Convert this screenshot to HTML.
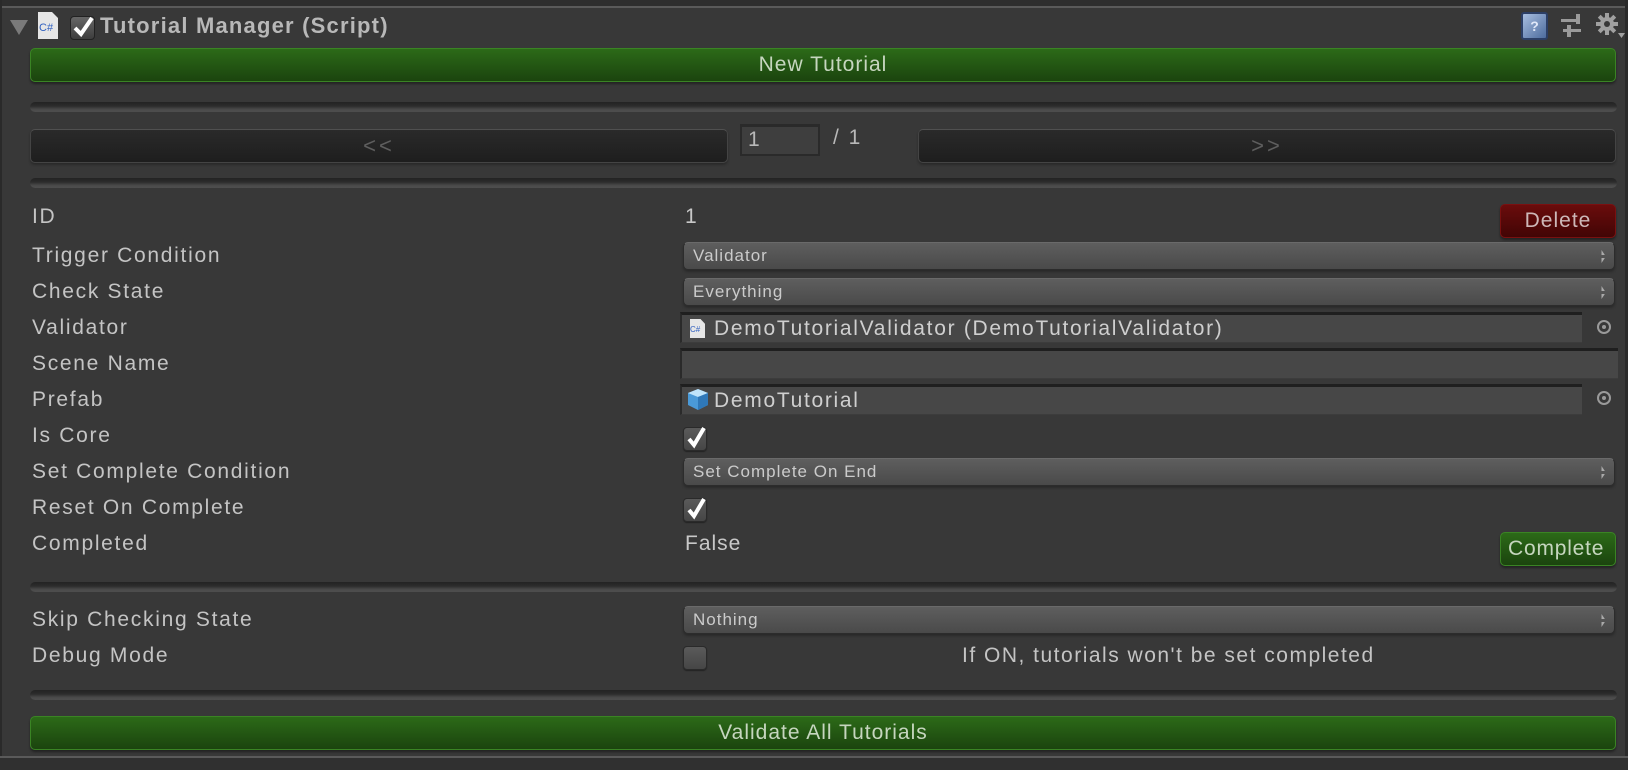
<!DOCTYPE html>
<html><head><meta charset="utf-8"><style>
*{box-sizing:border-box;margin:0;padding:0}
body{width:1628px;height:770px;background:#383838;overflow:hidden;position:relative;font-family:"Liberation Sans",sans-serif;color:#c2c2c2}
.a{position:absolute}
.lbl{position:absolute;left:32px;font-size:21px;letter-spacing:1.7px;line-height:24px;color:#c4c4c4;margin-top:1px}
.green{position:absolute;border:1px solid #3a8424;border-radius:5px;background:linear-gradient(#2c6a18,#1b440e);box-shadow:0 2px 2px #222;color:#c6d6bf;text-align:center;font-size:21px;letter-spacing:1px}
.dark{position:absolute;border:1px solid #444;border-top-color:#505050;border-radius:5px;background:linear-gradient(#2a2a2a,#1e1e1e);box-shadow:0 2px 2px #2a2a2a;color:#5e5e5e;text-align:center;font-size:22px;letter-spacing:3px}
.sep{position:absolute;left:30px;width:1587px;height:10px;border-radius:5px;background:linear-gradient(#232323 0,#2c2c2c 40%,#4a4a4a 75%,#4e4e4e 100%)}
.dd{position:absolute;left:683px;width:932px;height:28px;border:1px solid #2c2c2c;border-top-color:#6a6a6a;border-radius:5px;background:linear-gradient(#5e5e5e,#4a4a4a);box-shadow:0 2px 2px #2a2a2a;color:#cbcbcb;font-size:17px;letter-spacing:1px;line-height:26px;padding-left:9px}
.dd:after{content:"";position:absolute;right:9px;top:7px;width:7px;height:13px;background:linear-gradient(#aaa 0,#aaa 40%,transparent 40%,transparent 60%,#aaa 60%);clip-path:polygon(50% 0,100% 40%,0 40%,0 60%,100% 60%,50% 100%)}
.obj{position:absolute;left:680px;height:31px;background:#474747;border-top:3px solid #1f1f1f;border-left:2px solid #2a2a2a;border-bottom:1px solid #3c3c3c;font-size:21px;letter-spacing:1.7px;line-height:27px;color:#cfcfcf;padding-left:32px}
.tgt{position:absolute;left:1597px;width:14px;height:14px;border:2px solid #9a9a9a;border-radius:50%}
.tgt:after{content:"";position:absolute;left:3px;top:3px;width:4px;height:4px;background:#9a9a9a;border-radius:50%}
.cb{position:absolute;left:683px;width:24px;height:24px;border-radius:4px;background:linear-gradient(#5a5a5a,#464646);border:1px solid #2a2a2a;box-shadow:0 1px 1px #222}
.cb svg{position:absolute;left:1px;top:-3px}
.val{position:absolute;left:685px;font-size:21px;letter-spacing:1px;color:#c8c8c8;margin-top:1px}
</style></head><body>
<div class="a" style="left:0;top:0;width:1628px;height:6px;background:#2e2e2e"></div>
<div class="a" style="left:0;top:6px;width:1628px;height:2px;background:#5a5a5a"></div>
<div class="a" style="left:0;top:0;width:2px;height:770px;background:#2a2a2a"></div>
<div class="a" style="left:1625px;top:0;width:3px;height:770px;background:#2a2a2a"></div>
<div class="a" style="left:0;top:756px;width:1628px;height:2px;background:#5a5a5a"></div>
<div class="a" style="left:0;top:758px;width:1628px;height:12px;background:#303030"></div>

<svg class="a" style="left:10px;top:20px" width="18" height="16"><polygon points="0,0 18,0 9,15" fill="#7a7a7a"/></svg>
<div class="a" style="left:38px;top:12px;width:20px;height:27px;background:#e6e6e6;clip-path:polygon(0 0,70% 0,100% 22%,100% 100%,0 100%)"><span style="position:absolute;left:1px;top:10px;font-size:11px;color:#3060c0">C#</span></div>
<div class="a" style="left:70px;top:16px;width:25px;height:24px;border-radius:4px;background:linear-gradient(#666,#3e3e3e);border:1px solid #222"><svg width="24" height="24" style="position:absolute;left:0;top:-2px"><path d="M4 13 L10 19 L21 3" stroke="#fff" stroke-width="4" fill="none"/></svg></div>
<div class="a" style="left:100px;top:13px;font-size:22px;font-weight:bold;color:#b8b8b8;letter-spacing:1.2px">Tutorial Manager (Script)</div>
<div class="a" style="left:1521px;top:12px;width:27px;height:28px;border-radius:3px;background:linear-gradient(135deg,#a8bee0,#4d6c9e);border:2px solid #2c3f66;color:#e0e8f8;font-size:14px;font-weight:bold;text-align:center;line-height:24px">?</div>
<svg class="a" style="left:1561px;top:13px" width="22" height="26"><rect x="0" y="6" width="16" height="3" fill="#9a9a9a"/><rect x="15" y="1" width="4" height="10" fill="#9a9a9a"/><rect x="2" y="16" width="18" height="3" fill="#9a9a9a"/><rect x="6" y="12" width="4" height="12" fill="#9a9a9a"/></svg>
<svg class="a" style="left:1596px;top:13px" width="30" height="26"><g fill="#a0a0a0"><circle cx="11" cy="11" r="7"/><rect x="9" y="0" width="4" height="22"/><rect x="0" y="9" width="22" height="4"/><rect x="9" y="0" width="4" height="22" transform="rotate(45 11 11)"/><rect x="9" y="0" width="4" height="22" transform="rotate(-45 11 11)"/></g><circle cx="11" cy="11" r="3" fill="#383838"/><polygon points="22,20 29,20 25.5,25" fill="#a0a0a0"/></svg>

<div class="green" style="left:30px;top:48px;width:1586px;height:34px;line-height:31px">New Tutorial</div>
<div class="sep" style="top:102px"></div>

<div class="dark" style="left:30px;top:129px;width:698px;height:34px;line-height:32px">&lt;&lt;</div>
<div class="a" style="left:740px;top:124px;width:80px;height:32px;background:#3e3e3e;border:2px solid #2a2a2a;border-top-width:3px;font-size:21px;color:#b8b8b8;padding-left:6px;line-height:26px">1</div>
<div class="a" style="left:833px;top:126px;font-size:21px;color:#b8b8b8;letter-spacing:2px">/ 1</div>
<div class="dark" style="left:918px;top:129px;width:698px;height:34px;line-height:32px">&gt;&gt;</div>
<div class="sep" style="top:178px"></div>

<div class="lbl" style="top:204px">ID</div>
<div class="val" style="top:204px">1</div>
<div class="a" style="left:1500px;top:204px;width:116px;height:34px;border:1px solid #7a1010;border-radius:5px;background:linear-gradient(#6a0c0c,#420505);box-shadow:0 2px 2px #222;color:#cdb8b8;font-size:21px;letter-spacing:1px;text-align:center;line-height:31px">Delete</div>

<div class="lbl" style="top:243px">Trigger Condition</div>
<div class="dd" style="top:242px">Validator</div>
<div class="lbl" style="top:279px">Check State</div>
<div class="dd" style="top:278px">Everything</div>
<div class="lbl" style="top:315px">Validator</div>
<div class="obj" style="top:312px;width:902px">DemoTutorialValidator (DemoTutorialValidator)</div>
<div class="a" style="left:690px;top:319px;width:15px;height:19px;background:#e6e6e6;clip-path:polygon(0 0,70% 0,100% 25%,100% 100%,0 100%)"><span style="position:absolute;left:0;top:6px;font-size:8px;color:#3060c0">C#</span></div>
<div class="tgt" style="top:320px"></div>
<div class="lbl" style="top:351px">Scene Name</div>
<div class="obj" style="top:348px;width:938px"></div>
<div class="lbl" style="top:387px">Prefab</div>
<div class="obj" style="top:384px;width:902px">DemoTutorial</div>
<svg class="a" style="left:687px;top:388px" width="22" height="23"><polygon points="11,1 21,5 21,17 11,22 1,17 1,5" fill="#4a9ad8"/><polygon points="11,1 21,5 11,9 1,5" fill="#bfe4fa"/><polygon points="11,9 21,5 21,17 11,22" fill="#2f78b8"/></svg>
<div class="tgt" style="top:391px"></div>
<div class="lbl" style="top:423px">Is Core</div>
<div class="cb" style="top:427px"><svg width="24" height="26"><path d="M4 14 L9 20 L19 3" stroke="#fff" stroke-width="4" fill="none"/></svg></div>
<div class="lbl" style="top:459px">Set Complete Condition</div>
<div class="dd" style="top:458px">Set Complete On End</div>
<div class="lbl" style="top:495px">Reset On Complete</div>
<div class="cb" style="top:498px"><svg width="24" height="26"><path d="M4 14 L9 20 L19 3" stroke="#fff" stroke-width="4" fill="none"/></svg></div>
<div class="lbl" style="top:531px">Completed</div>
<div class="val" style="top:531px">False</div>
<div class="green" style="left:1500px;top:532px;width:116px;height:34px;line-height:31px;letter-spacing:0.8px;overflow:hidden;white-space:nowrap;text-align:left;padding-left:7px">Complete</div>
<div class="sep" style="top:582px"></div>

<div class="lbl" style="top:607px">Skip Checking State</div>
<div class="dd" style="top:606px">Nothing</div>
<div class="lbl" style="top:643px">Debug Mode</div>
<div class="cb" style="top:646px"></div>
<div class="a" style="left:962px;top:644px;font-size:21px;letter-spacing:1.5px;color:#c4c4c4">If ON, tutorials won't be set completed</div>
<div class="sep" style="top:690px"></div>

<div class="green" style="left:30px;top:716px;width:1586px;height:34px;line-height:31px">Validate All Tutorials</div>
</body></html>
